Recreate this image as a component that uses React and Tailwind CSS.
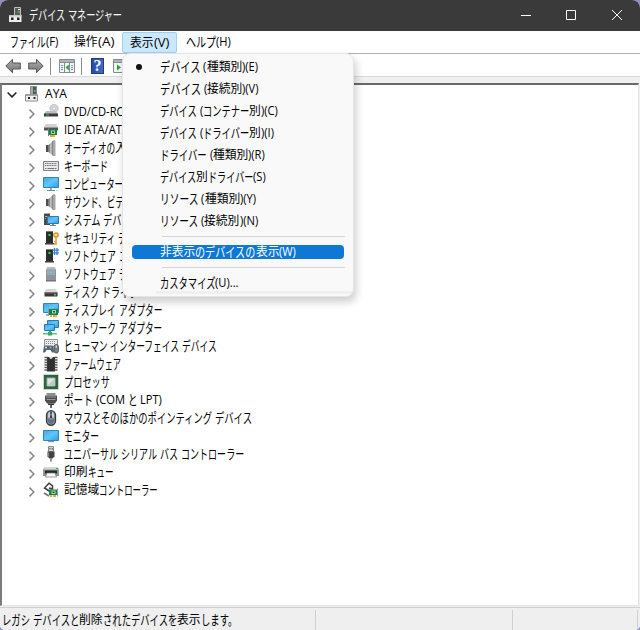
import React, { useLayoutEffect, useRef } from "react";

const RUNS = /([\u3040-\u30ff\u3001\u3002]+|[\u0020-\u007e]+)/;
const kindOf = (run) => {
  if (/^[\u3040-\u30ff\u3001\u3002]/.test(run)) return "kana";
  return /^[\u0020-\u007e]/.test(run) ? "latin" : "kanji";
};

// UI label with condensed kana; `w` is the advance width of the whole label.
function Label({ text, w, className = "" }) {
  const ref = useRef(null);
  const parts = text.split(RUNS).filter(Boolean);
  const hasKana = parts.some((p) => kindOf(p) === "kana");
  useLayoutEffect(() => {
    const fit = () => {
      const spans = [...ref.current.children];
      spans.forEach((s) => {
        s.style.width = "auto";
        s.style.transform = "none";
      });
      const target = hasKana ? "kana" : "latin";
      const base = { kana: 0.64, latin: 0.93, kanji: 0.98 };
      const sizes = spans.map((s) => s.getBoundingClientRect().width);
      let flexible = 0;
      let fixed = 0;
      spans.forEach((s, i) => {
        const kind = s.dataset.kind;
        if (kind === target) flexible += sizes[i];
        else fixed += sizes[i] * base[kind];
      });
      const k = w ? (w - fixed) / flexible : base[target];
      spans.forEach((s, i) => {
        const scale = s.dataset.kind === target ? k : base[s.dataset.kind];
        s.style.width = sizes[i] * scale + "px";
        s.style.transform = `scaleX(${scale})`;
      });
    };
    fit();
    document.fonts.ready.then(fit);
  }, [text, w, hasKana]);
  return (
    <span ref={ref} className={"flex whitespace-pre leading-[18px] " + className}>
      {parts.map((p, i) => (
        <span
          key={i}
          data-kind={kindOf(p)}
          className={kindOf(p) === "kana" ? "block origin-left text-[13.5px]" : "block origin-left"}
        >
          {p}
        </span>
      ))}
    </span>
  );
}

const Svg = ({ children, className = "size-4" }) => (
  <svg viewBox="0 0 16 16" className={className + " block shrink-0"}>{children}</svg>
);

const Gradients = () => (
  <svg className="absolute size-0">
    <defs>
      <linearGradient id="scr" x1="0" y1="0" x2="1" y2="1">
        <stop offset="0" stopColor="#36a9ec" />
        <stop offset=".5" stopColor="#62c5fa" />
        <stop offset="1" stopColor="#2c9ce2" />
      </linearGradient>
      <linearGradient id="metal" x1="0" y1="0" x2="1" y2="0">
        <stop offset="0" stopColor="#555" />
        <stop offset=".5" stopColor="#ccc" />
        <stop offset="1" stopColor="#777" />
      </linearGradient>
      <linearGradient id="arrow" x1="0" y1="0" x2="0" y2="1">
        <stop offset="0" stopColor="#aaa" />
        <stop offset="1" stopColor="#777" />
      </linearGradient>
    </defs>
  </svg>
);

const Tower = ({ x = 2 }) => (
  <g transform={`translate(${x} 0)`}>
    <path d="M1 1h7v12H1z" fill="#2d2d2d" />
    <path d="M1 1h7v1H1z" fill="#777" />
    <path d="M3.500 4h2v2h-2z" fill="#20e63a" />
    <path d="M0 13h9v2H0z" fill="#444" />
    <path d="M0 14h9v1H0z" fill="#999" />
  </g>
);

const Card = () => (
  <g>
    <path d="M6 7h9v6H6z" fill="#16804e" />
    <path d="M5 5.500h1V14H5z" fill="#999" />
    <path d="M9 8h4v3.500H9z" fill="#a8d99d" />
    <path d="M10 9h2v1.500h-2z" fill="#145c38" />
    <path d="M7 13h2v2H7zM10 13h4v2h-4z" fill="#efaa30" />
  </g>
);

const icons = {
  title: (
    <>
      <path d="M6.500.5h6v8h-6z" fill="#5c5c5c" stroke="#bdbdbd" />
      <path d="M10 2h2v1h-2z" fill="#eee" />
      <path d="M10 4h1.500v2H10z" fill="#28c552" />
      <path d="M1 8h12.500v7H1z" fill="#ececec" />
      <path d="M1 8h12.500v1.500H1z" fill="#c4c4c4" />
      <path d="M3 10.500h2.500V13H3zM9 10.500h2.500V13H9z" fill="#222" />
    </>
  ),
  root: (
    <>
      <path d="M5.500.5h6v8h-6z" fill="#555" stroke="#8a8a8a" />
      <path d="M6 1h2v7H6z" fill="#a8a8a8" />
      <path d="M9 4h1.500v2H9z" fill="#28d552" />
      <path d="M.5 8.500h12v6.500H.5z" fill="#efefef" stroke="#8c8c8c" />
      <path d="M1 8.500h11v1.500H1z" fill="#a8a8a8" />
      <path d="M3 11h2v2H3zM8.500 11h2v2h-2z" fill="#222" />
    </>
  ),
  dvd: (
    <>
      <circle cx="11" cy="4.500" r="4.200" fill="#d3d6d9" stroke="#b3b6b9" strokeWidth=".6" />
      <circle cx="11" cy="4.500" r="1.400" fill="#fff" stroke="#aaa" strokeWidth=".6" />
      <path d="M3 7h10l2 3H1z" fill="#bdbdbd" />
      <path d="M1 9.500h14v3H1z" fill="#3c3c3c" />
      <path d="M3 10.500h3v1H3z" fill="#26d347" />
    </>
  ),
  ide: (
    <>
      <path d="M3 2h10l2 3H1z" fill="#d2d2d2" />
      <path d="M1 5h14v3.500H1z" fill="#555" />
      <path d="M1 5h14v1H1z" fill="#999" />
      <path d="M6 7h8v6H6z" fill="#16804e" />
      <path d="M5 6h1v8H5z" fill="#777" />
      <path d="M8 8.500h4V12H8z" fill="#a8d99d" />
      <path d="M9 9.500h2v1.500H9z" fill="#145c38" />
      <path d="M7 13h5v2H7z" fill="#efaa30" />
    </>
  ),
  speaker: (
    <>
      <path d="M3 5h2.500v7H3z" fill="#4d4d4d" />
      <path d="M5.500 5L10 .8v15L5.500 12z" fill="url(#metal)" />
      <path d="M10 .8h2v15h-2z" fill="#b4b8bb" stroke="#85898c" strokeWidth=".7" />
    </>
  ),
  keyboard: (
    <>
      <path d="M.5 3.500h15v9H.5z" fill="#e9e9e9" stroke="#7c8084" />
      <path d="M2 5.500h12M2 7.500h12M2 10.500h2M12 10.500h2" stroke="#73777b" strokeDasharray="1.200 .5" />
      <path d="M4.500 10.500h7" stroke="#73777b" />
    </>
  ),
  computer: (
    <>
      <path d="M.5 1.500h15v10H.5z" fill="url(#scr)" stroke="#3285b9" />
      <path d="M7 12h2v2H7z" fill="#9ab" />
      <path d="M4 14h8v1H4z" fill="#6e8795" />
      <path d="M1 14.500h2M13 14.500h2" stroke="#c8d4da" />
    </>
  ),
  system: (
    <>
      <path d="M1 1h6v12H1z" fill="#4a4a4a" />
      <path d="M1 1h6v1H1zM2 4h4v1H2z" fill="#aaa" />
      <path d="M2 6h1v1H2z" fill="#2e4" />
      <path d="M4.500 4.500h11v7h-11z" fill="url(#scr)" stroke="#2a7cae" />
      <path d="M9 12h2v1H9zM7 13h6v1H7z" fill="#6e8795" />
    </>
  ),
  security: (
    <>
      <Tower x={2} />
      <circle cx="13" cy="5" r="2.100" fill="#f6e2ae" stroke="#d89628" strokeWidth="1.500" />
      <path d="M13 7.500V15M13 11.500h-2M13 14h-2" stroke="#dda03a" strokeWidth="1.500" />
    </>
  ),
  component: (
    <>
      <Tower x={2} />
      <path d="M11.500 0v7M14 0v7M9.500 2.200H16M9.500 4.800H16" stroke="#3582c4" strokeWidth="1.300" />
    </>
  ),
  softdev: (
    <>
      <path d="M4 1h8l1 3H3z" fill="#b8bdc1" />
      <path d="M3 3.500h10V15H3z" fill="#8d959b" />
      <path d="M4 4h8v5H4z" fill="#9ea7ad" />
      <circle cx="8" cy="6" r="1.600" fill="#4fb4dc" />
      <circle cx="8" cy="6" r=".6" fill="#fff" />
      <path d="M3 14h10v1.500H3z" fill="#6e757a" />
    </>
  ),
  disk: (
    <>
      <path d="M3 5h10l2 4H1z" fill="#d6d6d6" />
      <path d="M1.500 8.500h13v4h-13z" fill="#393939" />
      <path d="M1.500 8.500h13v1h-13z" fill="#666" />
      <path d="M11 10h2v1.500h-2z" fill="#2ed54a" />
    </>
  ),
  display: (
    <>
      <path d="M.5 1.500h15v9H.5z" fill="url(#scr)" stroke="#3285b9" />
      <path d="M3 12h3v2H3z" fill="#9ab" />
      <Card />
    </>
  ),
  network: (
    <>
      <path d="M4.500.5h11v7h-11z" fill="url(#scr)" stroke="#2a7cae" />
      <path d="M1.500 4.500h10v6h-10z" fill="url(#scr)" stroke="#2a7cae" />
      <path d="M6 11h2v2H6z" fill="#48b879" />
      <path d="M0 13h14v1.500H0z" fill="#53c784" />
      <path d="M5 12h4v3.500H5z" fill="#36a967" />
    </>
  ),
  hid: (
    <>
      <path d="M1.500 1.500h13v7h-13z" fill="#eee" stroke="#929292" />
      <path d="M3 3.500h10M3 5.500h10" stroke="#888" strokeDasharray="1 1" />
      <path d="M2 7.500h7.500l1 2 .5 5H9L7.500 12h-4L2 14.500H0L.8 9z" fill="#59636d" />
      <circle cx="3" cy="9.500" r="1" fill="#dfe7ee" />
      <circle cx="7.500" cy="9.500" r="1" fill="#61b9e8" />
      <rect x="11" y="6.500" width="4.500" height="8.500" rx="2.200" fill="#75808a" stroke="#3e444a" strokeWidth=".8" />
      <path d="M13.200 7v3" stroke="#fff" strokeWidth=".8" />
    </>
  ),
  firmware: (
    <>
      <path d="M4 1h8v14.500H4z" fill="#2f2f2f" />
      <path d="M1.500 1.500h3M11.500 1.500h3M1.500 4h3M11.500 4h3M1.500 6.500h3M11.500 6.500h3M1.500 9h3M11.500 9h3M1.500 11.500h3M11.500 11.500h3M1.500 14h3M11.500 14h3" stroke="#555" strokeWidth="1.300" />
      <path d="M6.200 1h3.600c0 2.600-3.600 2.600-3.600 0z" fill="#ddd" />
    </>
  ),
  cpu: (
    <>
      <path d="M.5.5h15v15H.5z" fill="none" stroke="#b9a46b" strokeDasharray="1 1" />
      <path d="M1 1h14v14H1z" fill="#286448" />
      <path d="M4 4h8v8H4z" fill="#e3e5e2" stroke="#9ab3a2" />
      <path d="M5 11l6-6v6z" fill="#c4c8c4" />
    </>
  ),
  port: (
    <>
      <path d="M3.500 1h9v2.500h-9z" fill="#8f8f8f" />
      <path d="M2 3.500h12v5l-2 3H4l-2-3z" fill="#4e4e4e" />
      <path d="M3 5h10M3.500 7.500h9" stroke="#a2a2a2" strokeWidth=".9" />
      <path d="M5 11.500h6v1.500H5z" fill="#383838" />
      <path d="M7 13h2v3H7z" fill="#666" />
    </>
  ),
  mouse: (
    <>
      <rect x="3.500" y=".7" width="9" height="14.600" rx="4.500" fill="#82909d" stroke="#33383d" strokeWidth="1.300" />
      <path d="M5 7V5q0-3 2-3.500V8zM11 7V5q0-3-2-3.500V8z" fill="#c5d0da" />
      <path d="M8 2v6" stroke="#202428" strokeWidth="1.500" />
      <path d="M8 3.500v2" stroke="#eee" strokeWidth=".8" />
      <path d="M5 9q3 1.500 6 0v2q-1 3-3 3t-3-3z" fill="#63717e" />
    </>
  ),
  monitor: (
    <>
      <path d="M.5 2.500h15v10H.5z" fill="url(#scr)" stroke="#3285b9" />
      <path d="M5 13h6v1.200H5z" fill="#7d98a8" />
    </>
  ),
  usb: (
    <>
      <path d="M5.500.5h5v5h-5z" fill="#d5d5d5" stroke="#888" />
      <path d="M6.500 2h1v1.500h-1zM8.700 2h1v1.500h-1z" fill="#555" />
      <path d="M4.500 5.500h7v5l-2 2h-3l-2-2z" fill="#444" />
      <path d="M5.500 6.500v4" stroke="#888" />
      <path d="M7.200 12.500h1.600v3H7.200z" fill="#777" />
    </>
  ),
  printer: (
    <>
      <path d="M2 3h12l2 2.500V12H0V5.500z" fill="#8d9397" />
      <path d="M2 3h12l1.500 2.500H.5z" fill="#d4d8da" />
      <path d="M13 4h2v1.200h-2z" fill="#22c63f" />
      <path d="M2 6.500h12v3H2z" fill="#282828" />
      <path d="M4 9h8l1.500 4h-11z" fill="#f5f8fa" stroke="#777" strokeWidth=".7" />
    </>
  ),
  storage: (
    <>
      <path d="M7 9.500L1.500 6 6 1.200l4 3M9.500 4v3L6 6" fill="none" stroke="#3f3f3f" strokeWidth="1.500" />
      <path d="M1 11l5 3" stroke="#777" strokeWidth="2" />
      <path d="M6 7.500h9v5.500H6z" fill="#16804e" />
      <path d="M14.500 6.500v8" stroke="#999" />
      <path d="M8.500 8.500h4V12h-4z" fill="#a8d99d" />
      <path d="M9.500 9.500h2v1.500h-2z" fill="#145c38" />
      <path d="M7 13h2v2H7zM10 13h3v2h-3z" fill="#efaa30" />
    </>
  ),
};

const tree = [
  ["dvd", "DVD/CD-ROM ドライブ", 109],
  ["ide", "IDE ATA/ATAPI コントローラー", 144],
  ["speaker", "オーディオの入力および出力"],
  ["keyboard", "キーボード", 44],
  ["computer", "コンピューター", 59],
  ["speaker", "サウンド、ビデオ、およびゲーム コントローラー"],
  ["system", "システム デバイス", 76],
  ["security", "セキュリティ デバイス"],
  ["component", "ソフトウェア コンポーネント"],
  ["softdev", "ソフトウェア デバイス"],
  ["disk", "ディスク ドライブ", 74],
  ["display", "ディスプレイ アダプター", 98],
  ["network", "ネットワーク アダプター", 98],
  ["hid", "ヒューマン インターフェイス デバイス", 153],
  ["firmware", "ファームウェア", 57],
  ["cpu", "プロセッサ", 46],
  ["port", "ポート (COM と LPT)", 98],
  ["mouse", "マウスとそのほかのポインティング デバイス", 188],
  ["monitor", "モニター", 35],
  ["usb", "ユニバーサル シリアル バス コントローラー", 180],
  ["printer", "印刷キュー", 49],
  ["storage", "記憶域コントローラー", 94],
];

const viewItems = [
  ["デバイス (種類別)(E)", 98],
  ["デバイス (接続別)(V)", 99],
  ["デバイス (コンテナー別)(C)", 118],
  ["デバイス (ドライバー別)(I)", 114],
  ["ドライバー (種類別)(R)", 105],
  ["デバイス別ドライバー(S)", 106],
  ["リソース (種類別)(Y)", 96],
  ["リソース (接続別)(N)", 98],
];

function Console() {
  return (
    <Svg>
      <path d="M.5 1.500h15v13H.5z" fill="#f5f6f7" stroke="#858b91" />
      <path d="M1 2h14v2H1z" fill="#aeb5bb" />
      <path d="M1 4.500h14M5.500 5v9M10.500 5v9" stroke="#858b91" />
      <path d="M2 7.500h2M2 9.500h2M2 11.500h2M12 7.500h2M12 9.500h2M12 11.500h2" stroke="#6e93b8" />
      <path d="M9.800 6.500v6L6.500 9.500z" fill="#27a52c" />
    </Svg>
  );
}

function NextConsole() {
  return (
    <Svg>
      <path d="M.5 1.500h15v13H.5z" fill="#f5f6f7" stroke="#858b91" />
      <path d="M1 2h14v2H1z" fill="#aeb5bb" />
      <path d="M1 4.500h14" stroke="#858b91" />
      <path d="M4 6.500v6l4-3z" fill="#27a52c" />
    </Svg>
  );
}

const Arrow = ({ flip }) => (
  <Svg className={flip ? "size-4 -scale-x-100" : "size-4"}>
    <path d="M.8 8L7.500 1.300V5H15.300v6H7.500v3.700z" fill="url(#arrow)" stroke="#555" />
  </Svg>
);

export default function App() {
  return (
    <div className="relative h-[630px] w-[640px] overflow-hidden bg-[#8d8fd0] font-['Open_Sans','Noto_Sans_CJK_JP',sans-serif] text-[12px] text-black">
      <Gradients />
      <div className="flex h-full flex-col overflow-hidden rounded-t-[8px] rounded-b-[5px] bg-[#f0f0f0]">
        <header className="flex h-[31px] shrink-0 items-start bg-[#3a3a3a] text-white">
          <div className="mt-[7px] ml-[8px] flex">
            <Svg>{icons.title}</Svg>
          </div>
          <Label text="デバイス マネージャー" w={93} className="mt-[6px] ml-[5px] grow" />
          <div className="mt-2 flex w-[138px]">
            {["M4 7.500h10", "M3.500 2.500h9v9h-9z", "M3 2l10 10M13 2L3 12"].map((d) => (
              <div key={d} className="flex w-[46px] justify-center">
                <Svg>
                  <path d={d} fill="none" stroke="#fff" strokeWidth="1" strokeLinejoin="round" />
                </Svg>
              </div>
            ))}
          </div>
        </header>
        <nav className="flex h-[22px] shrink-0 items-center bg-white pl-[10px]">
          <Label text="ファイル(F)" w={48} className="mr-4" />
          <Label text="操作(A)" w={40} className="mr-2" />
          <div className="flex h-[21px] w-[55px] items-center justify-center rounded-[2px] border border-[#99d1ff] bg-[#cce8ff]">
            <Label text="表示(V)" w={39} className="mt-px" />
          </div>
          <Label text="ヘルプ(H)" w={45} className="ml-[9px]" />
        </nav>
        <div className="flex h-[24px] shrink-0 items-center border-t border-b border-t-[#b0b0b8] border-b-[#d9d9d9] bg-white pt-[2px] pl-[5px]">
          <Arrow />
          <div className="w-[7px]" />
          <Arrow flip />
          <div className="mr-[8px] ml-[6px] h-[17px] w-px bg-[#8a8a8a]" />
          <Console />
          <div className="mr-[9px] ml-[6px] h-[17px] w-px bg-[#8a8a8a]" />
          <div className="flex h-4 w-[13px] items-center justify-center border border-[#213a83] bg-gradient-to-r from-[#244da9] to-[#4169c7] font-['Liberation_Serif'] text-[16px] leading-none font-bold text-white">
            ?
          </div>
          <div className="w-[9px]" />
          <NextConsole />
        </div>
        <main className="mt-[6px] mr-px flex h-[523px] shrink-0 flex-col border-t-2 border-r border-b border-l-2 border-t-[#696969] border-r-[#e3e3e3] border-b-[#e3e3e3] border-l-[#7c7c7c] bg-white">
          <div className="flex h-[18px] shrink-0 items-center pl-[5px]">
            <Svg className="mt-[2px] size-[10px]">
              <path d="M1 4l7 7 7-7" fill="none" stroke="#222" strokeWidth="2.400" />
            </Svg>
            <div className="mr-[3px] ml-[8px]">
              <Svg>{icons.root}</Svg>
            </div>
            <Label text="AYA" w={22} className="ml-[1px]" />
          </div>
          {tree.map(([icon, text, w]) => (
            <div key={text} className="flex h-[18px] shrink-0 items-center pl-[25px]">
              <Svg className="mt-[3px] size-[10px]">
                <path d="M4 1l7 7-7 7" fill="none" stroke="#858585" strokeWidth="2.300" />
              </Svg>
              <div className="mr-[5px] ml-[6px]">
                <Svg>{icons[icon]}</Svg>
              </div>
              <Label text={text} w={w} />
            </div>
          ))}
        </main>
        <footer className="mt-px flex grow border-t border-[#cfcfcf] bg-[#efefef] pt-[2px]">
          <div className="flex w-[316px] border-r border-[#cfcfcf] pt-[1px] pl-[2px]">
            <Label text="レガシ デバイスと削除されたデバイスを表示します。" w={235} />
          </div>
          <div className="w-[197px] border-r border-[#cfcfcf]" />
          <div className="w-[125px] border-r border-[#cfcfcf]" />
        </footer>
      </div>

      <div className="absolute top-[53px] left-[122px] flex h-[244px] w-[232px] flex-col rounded-[8px] border border-[#e5e5e5] bg-[#f9f9f9] pt-[2px] shadow-[2px_5px_8px_rgba(0,0,0,0.2)]">
        {viewItems.map(([text, w], i) => (
          <div key={text} className="flex h-[22px] shrink-0 items-center">
            <div className="flex w-[37px] pl-[13px]">
              {i === 0 && <div className="size-[6px] rounded-full bg-[#111]" />}
            </div>
            <Label text={text} w={w} />
          </div>
        ))}
        <div className="mt-[4px] mr-[8px] ml-[39px] h-px shrink-0 bg-[#d5d5d5]" />
        <div className="mt-[8px] mr-[9px] ml-[9px] flex h-[14px] shrink-0 items-center rounded-[4px] bg-[#0f78d4] pl-[28px] text-white">
          <Label text="非表示のデバイスの表示(W)" w={136} />
        </div>
        <div className="mt-[8px] mr-[8px] ml-[39px] h-px shrink-0 bg-[#d5d5d5]" />
        <div className="mt-[6px] flex h-[17px] shrink-0 items-center pl-[37px]">
          <Label text="カスタマイズ(U)..." w={79} />
        </div>
        <div className="mr-px ml-[33px] h-[3px] shrink-0 bg-[#f0f0f0]" />
      </div>
    </div>
  );
}
